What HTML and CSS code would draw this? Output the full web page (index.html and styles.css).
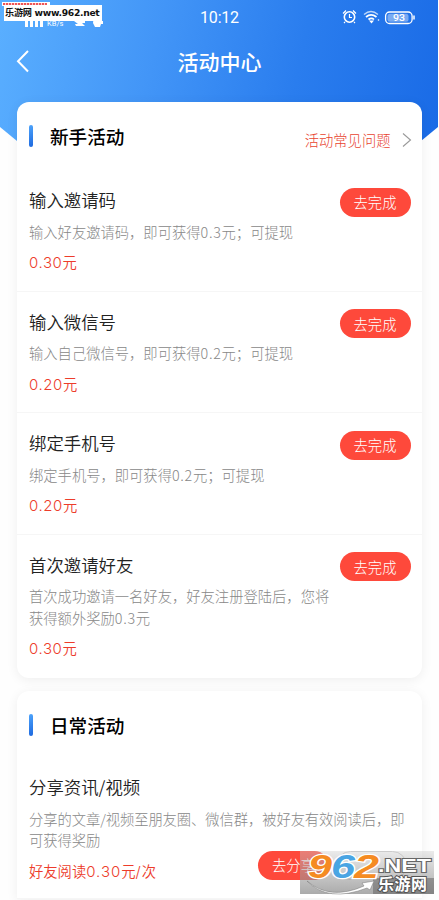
FILE: index.html
```html
<!DOCTYPE html>
<html lang="zh-CN">
<head>
<meta charset="utf-8">
<title>活动中心</title>
<link rel="stylesheet" href="styles.css">
</head>
<body>
<div class="screen">
  <div class="hero"></div>
  <div class="site-tag"><span class="tag-strip"></span><span class="tag-text">乐游网 www.962.net</span></div>
  <header class="status">
    <svg class="signal" width="88" height="12" viewBox="0 0 88 12" fill="#fff">
      <path d="M0 4h3v8H0zM5 3h3v9H5zM10 2h3v10h-3zM15 1h3v11h-3z"/>
      <text x="22" y="11" font-size="7.5" font-family="Roboto">KB/s</text>
      <path d="M49 6h11v2h-3l3 3h-9l-1-2h3zM69 0h7v6h2v3h-2l-1 3h-5l-2-4z"/>
    </svg>
    <span class="clock">10:12</span>
    <svg class="status-icons" width="76" height="18" viewBox="0 0 76 18" fill="none" stroke="#fff">
      <circle cx="7.5" cy="9" r="5.2" stroke-width="1.6"/>
      <path d="M7.5 6v3.5H10M1 5.5l3-3M14 5.5l-3-3M3 14l-1 1M12 14l1 1" stroke-width="1.2"/>
      <path d="M22 6.5q7-6 14 0" stroke-width="1.3" opacity=".7"/><path d="M24 9q5-4.4 10.500 0M26.500 11.500q3-2.400 5.500 0" stroke-width="1.700"/>
      <path d="M27 12.500h5l-2.500 3z" fill="#fff" stroke="none"/><circle cx="36.500" cy="12" r=".8" fill="#fff" stroke="none"/>
      <rect x="43.600" y="4" width="26.500" height="11.500" rx="4" stroke-width="1.300"/>
      <rect x="45.500" y="5.700" width="21" height="8" rx="2.500" fill="#fff" fill-opacity=".4" stroke="none"/>
      <path d="M72 7.500v4" stroke-width="1.500"/>
      <text x="57" y="13" text-anchor="middle" fill="#fff" stroke="none" font-size="9" font-family="Roboto" font-weight="500" textLength="12" lengthAdjust="spacingAndGlyphs">93</text>
    </svg>
  </header>
  <nav class="nav">
    <svg class="back" width="14" height="24" viewBox="0 0 14 24" fill="none" stroke="#fff" stroke-width="2"><path d="M12 2L2 12.200 12 22.500"/></svg>
    <h1>活动中心</h1>
  </nav>
  <main>
    <section class="card">
      <div class="card-head"><i class="bar"></i><h2>新手活动</h2>
        <a class="faq">活动常见问题<svg width="10" height="16" viewBox="0 0 10 16" fill="none" stroke="#999" stroke-width="1.100"><path d="M1 1.500L8.500 8 1 14.500"/></svg></a>
      </div>
      <article class="task">
        <div class="info"><h3>输入邀请码</h3><p>输入好友邀请码，即可获得<span class="n">0.3</span>元；可提现</p><strong><span class="num">0.30</span>元</strong></div>
        <button>去完成</button>
      </article>
      <article class="task">
        <div class="info"><h3>输入微信号</h3><p>输入自己微信号，即可获得<span class="n">0.2</span>元；可提现</p><strong><span class="num">0.20</span>元</strong></div>
        <button>去完成</button>
      </article>
      <article class="task">
        <div class="info"><h3>绑定手机号</h3><p>绑定手机号，即可获得<span class="n">0.2</span>元；可提现</p><strong><span class="num">0.20</span>元</strong></div>
        <button>去完成</button>
      </article>
      <article class="task">
        <div class="info"><h3>首次邀请好友</h3><p>首次成功邀请一名好友，好友注册登陆后，您将<br>获得额外奖励<span class="n">0.3</span>元</p><strong><span class="num">0.30</span>元</strong></div>
        <button>去完成</button>
      </article>
    </section>
    <section class="card daily">
      <div class="card-head"><i class="bar"></i><h2>日常活动</h2></div>
      <article class="task share">
        <div class="info"><h3>分享资讯/视频</h3><p class="tight">分享的文章/视频至朋友圈、微信群，被好友有效阅读后，即<br>可获得奖励</p></div>
        <div class="share-row"><strong>好友阅读<span class="sum">0.30</span>元<span class="sum">/</span>次</strong><button>去分享</button><button class="ghost" aria-hidden="true"></button></div>
      </article>
    </section>
  </main>
  <div class="watermark">
    <svg width="135" height="44" viewBox="0 0 135 44">
      <path d="M73 27h61v16H73z" fill="#555" fill-opacity=".45"/>
      <path d="M7 30Q30 50 64 35l-2-3 12-2-4 9-3-2Q28 52 7 30Z" fill="#fff" stroke="#777" stroke-width=".5"/>
      <g class="wm-num"><text x="8" y="27" fill="#f58b22" textLength="24" lengthAdjust="spacingAndGlyphs">9</text><text x="31" y="27" fill="#4aa5e3" textLength="24" lengthAdjust="spacingAndGlyphs">6</text><text x="54" y="27" fill="#f58b22" textLength="25" lengthAdjust="spacingAndGlyphs">2</text></g>
      <text class="wm-net" x="78" y="21" textLength="53" lengthAdjust="spacingAndGlyphs">.NET</text>
      <text class="wm-cn" x="78" y="39" textLength="49">乐游网</text>
    </svg>
  </div>
</div>
</body>
</html>
```
FILE: styles.css
```css
* { box-sizing: border-box; margin: 0; padding: 0; }
body { width: 439px; height: 900px; overflow: hidden; background: #fefefe; font-family: "Noto Sans CJK SC", sans-serif; }
.screen { position: relative; height: 900px; overflow: hidden; }
.hero { position: absolute; left: 0; top: 0; width: 438px; height: 170px; background: linear-gradient(102deg, #5aafff 0%, #4295f7 35%, #2a7dee 66%, #196ae6 100%); clip-path: polygon(0 0, 100% 0, 100% 127px, 421px 141px, 380px 165px, 58px 165px, 17px 141px, 0 127px); }
.site-tag { position: absolute; z-index: 3; left: 2px; top: 2px; width: 100px; height: 18px; }
.tag-strip { position: absolute; left: 0; top: 0; width: 48px; height: 4px; background: repeating-linear-gradient(90deg, #e55 0 2px, #fcc 2px 3px) 1px 1px / 44px 2px no-repeat #fff; }
.tag-text { position: absolute; left: 2px; top: 3px; width: 98px; height: 16px; padding-left: 1px; background: #fff; color: #111; font: 700 9.2px/16px "DejaVu Sans", "Noto Sans CJK SC", sans-serif; white-space: nowrap; letter-spacing: -.3px; }
.status { position: relative; height: 36px; display: grid; grid-template-columns: 120px 1fr 97px; align-items: center; color: #fff; }
.signal { margin: 6px 0 0 25px; }
.clock { text-align: center; font: 400 16px/20px Roboto, sans-serif; padding-right: 23px; letter-spacing: -.2px; }
.status-icons { margin-top: -2px; }
.nav { position: relative; height: 66px; display: flex; align-items: flex-start; padding: 13px 0 0 16px; color: #fff; }
.nav h1 { flex: 1; margin-top: -1px; padding-right: 30px; text-align: center; font-size: 21px; line-height: 27px; font-weight: 500; }
.card { position: relative; width: 404.5px; margin-left: 17px; background: #fff; border-radius: 12px; box-shadow: 0 2px 12px rgba(0,0,0,.065); }
.card-head { height: 68px; display: flex; align-items: center; padding: 0 10px 0 12px; }
.bar { width: 4px; height: 22px; border-radius: 2px; background: linear-gradient(155deg, #4ea4fb, #1c68df); }
.card-head h2 { flex: 1; margin-left: 17px; margin-top: -1px; font-size: 18.600px; line-height: 26px; font-weight: 500; color: #000; }
.faq { display: flex; align-items: center; gap: 11px; margin-top: 7px; font-size: 14.300px; line-height: 20px; font-weight: 300; color: #e8432f; }
.task { height: 121.500px; padding: 18px 11px 0 12px; display: flex; justify-content: space-between; align-items: flex-start; border-bottom: 1px solid #f6f6f6; }
.task:last-child { height: 143px; border-bottom: 0; }
.info { white-space: nowrap; }
.task h3 { font-size: 17.400px; line-height: 24px; font-weight: 350; color: #222; }
.task p { margin-top: 8.500px; font-size: 14.300px; line-height: 21.500px; font-weight: 300; color: #888; }
.task .tight { letter-spacing: -.07px; }
.task strong { display: block; font-size: 14.300px; line-height: 20px; font-weight: 350; color: #ed3c2b; }
.info strong { margin-top: 10px; }
.num { font-family: Inter, sans-serif; font-size: 15px; line-height: 1; font-weight: 300; letter-spacing: .600px; }
.sum { font-family: Inter, sans-serif; font-weight: 300; font-size: 15px; line-height: 1; letter-spacing: 1px; }
.n { letter-spacing: .700px; }
.task button { flex: none; width: 71px; height: 29px; margin-top: -.500px; border: 0; border-radius: 15px; background: #fe493b; color: #fff; font: 300 14.300px/28px "Noto Sans CJK SC", sans-serif; }
.daily { margin-top: 13.500px; height: 207.500px; border-bottom: 1px solid #f6f6f6; border-radius: 12px 12px 0 0; }
.daily .card-head { height: 66px; padding-top: 2px; }
.share { display: block; }
.share-row { display: flex; align-items: flex-start; }
.share-row strong { width: 229px; margin-top: 10px; }
.task .share-row button { margin-top: 0; }
.task .share-row .ghost { margin-left: 7px; background: #fff; border: 1px solid #ccc; }
.watermark { position: absolute; left: 300px; top: 851px; width: 134px; height: 43px; background: linear-gradient(rgba(205,205,205,.4), rgba(135,135,135,.7)); }
.watermark svg { display: block; }
.wm-num { font: italic 700 34px "Liberation Sans", sans-serif; stroke: #fff; stroke-width: 2.5px; paint-order: stroke; }
.wm-net { font: 700 18px "Liberation Sans", sans-serif; fill: #fff; stroke: #666; stroke-width: 2px; paint-order: stroke; }
.wm-cn { font: 700 16px "Noto Sans CJK SC", sans-serif; fill: #fff; stroke: #555; stroke-width: 2px; paint-order: stroke; }
```
